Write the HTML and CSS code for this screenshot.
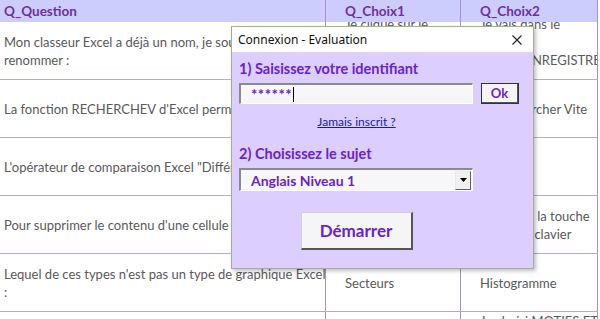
FILE: index.html
```html
<!DOCTYPE html>
<html lang="fr">
<head>
    <meta charset="UTF-8">
    <meta name="viewport" content="width=device-width, initial-scale=1.0">
    <title>Connexion - Evaluation</title>
    <link rel="stylesheet" href="styles.css">
</head>
<body>
    <div class="sheet">
        <div class="row head">
            <div class="cell">Q_Question</div>
            <div class="cell choice">Q_Choix1</div>
            <div class="cell choice">Q_Choix2</div>
        </div>
        <div class="row">
            <div class="cell"><div>Mon classeur Excel a déjà un nom, je souhaite le<br>renommer :</div></div>
            <div class="cell choice"><div>Je clique sur le<br>bouton Office<br>Renommer<br>sous</div></div>
            <div class="cell choice"><div>Je vais dans le<br>menu<br>Fichier, ENREGISTRER SOUS<br>sous</div></div>
        </div>
        <div class="row">
            <div class="cell"><div>La fonction RECHERCHEV d'Excel permet de :</div></div>
            <div class="cell choice"><div>Rechercher</div></div>
            <div class="cell choice"><div>De rechercher Vite</div></div>
        </div>
        <div class="row">
            <div class="cell"><div>L'opérateur de comparaison Excel "Différent de" s'écrit :</div></div>
            <div class="cell choice"><div>!=</div></div>
            <div class="cell choice"><div>&lt;&gt;</div></div>
        </div>
        <div class="row">
            <div class="cell"><div>Pour supprimer le contenu d'une cellule :</div></div>
            <div class="cell choice"><div>Suppr</div></div>
            <div class="cell choice"><div>J'enfonce la touche<br>Suppr du clavier</div></div>
        </div>
        <div class="row">
            <div class="cell"><div>Lequel de ces types n'est pas un type de graphique Excel<br>:</div></div>
            <div class="cell choice"><div>Secteurs</div></div>
            <div class="cell choice"><div>Histogramme</div></div>
        </div>
        <div class="row last">
            <div class="cell"><div></div></div>
            <div class="cell choice"><div></div></div>
            <div class="cell choice"><div>Je choisi MOTIES ET</div></div>
        </div>
    </div>

    <div class="dialog">
        <div class="title-bar">
            <span>Connexion - Evaluation</span>
            <svg class="close" width="10" height="10" viewBox="0 0 10 10">
                <path d="M0.5 0.5 L9.5 9.5 M9.5 0.5 L0.5 9.5" stroke="#222" stroke-width="1.1" fill="none"/>
            </svg>
        </div>
        <div class="dialog-body">
            <div class="label">1) Saisissez votre identifiant</div>
            <div class="login-line">
                <div class="text-box">******<span class="caret"></span></div>
                <button class="ok-btn">Ok</button>
            </div>
            <div class="link-line"><a href="#">Jamais inscrit ?</a></div>
            <div class="label second">2) Choisissez le sujet</div>
            <div class="combo">
                <span>Anglais Niveau 1</span>
                <span class="drop-btn">
                    <svg width="7" height="4" viewBox="0 0 7 4"><path d="M0 0 H7 L3.5 4 Z" fill="#000"/></svg>
                </span>
            </div>
            <div class="start-line">
                <button class="start-btn">Démarrer</button>
            </div>
        </div>
    </div>
</body>
</html>
```

FILE: styles.css
```css
* {
    margin: 0;
    padding: 0;
    box-sizing: border-box;
}

body {
    width: 600px;
    height: 319px;
    overflow: hidden;
    background: #fff;
    font-family: Lato, 'Liberation Sans', sans-serif;
    position: relative;
}

/* worksheet behind the form */
.sheet {
    width: 598px;
}

.row {
    display: grid;
    grid-template-columns: 326px 135px 137px;
    height: 58px;
    border-bottom: 1px solid #b9a9d9;
    color: #595959;
    font-size: 13px;
    line-height: 18px;
}

.row.head {
    height: 22px;
    border-bottom: none;
    background: #cdcdfd;
    color: #7030a0;
    font-weight: bold;
    font-size: 13.5px;
}

.cell {
    display: flex;
    align-items: center;
    padding-left: 4px;
    border-right: 1px solid #a68fcc;
    overflow: hidden;
    white-space: nowrap;
}

.cell.choice {
    padding-left: 19px;
}

.row.last .cell {
    align-items: flex-start;
}

/* form window */
.dialog {
    position: absolute;
    left: 231px;
    top: 26px;
    width: 303px;
    height: 243px;
    border: 1px solid #a3b08f;
    background: #dccfff;
    box-shadow: 2px 2px 4px rgba(0, 0, 0, 0.25);
    display: flex;
    flex-direction: column;
}

.title-bar {
    height: 25px;
    background: #fff;
    display: flex;
    align-items: center;
    justify-content: space-between;
    padding: 0 11px 0 6px;
    font-family: 'Noto Sans', sans-serif;
    font-size: 12px;
    color: #111;
}

.dialog-body {
    padding: 7px 0 0 7px;
    width: 242px;
    font-family: Lato, sans-serif;
    font-weight: bold;
    color: #6a22c9;
}

.label {
    font-size: 14.5px;
    line-height: 20px;
}

.label.second {
    margin-top: 14px;
}

.login-line {
    display: flex;
    gap: 8px;
    margin-top: 4px;
    width: 281px;
}

.text-box {
    width: 234px;
    height: 21px;
    background: #f7f7f7;
    border-top: 2px solid #8a8a8a;
    border-left: 2px solid #8a8a8a;
    border-bottom: 1px solid #fff;
    border-right: 1px solid #fff;
    padding-left: 10px;
    font-size: 15px;
    letter-spacing: 0.5px;
    line-height: 19px;
    display: flex;
    align-items: center;
}

.caret {
    display: inline-block;
    width: 1px;
    height: 15px;
    margin-left: 1px;
    background: #000;
}

.ok-btn, .start-btn {
    background: #f5f5f5;
    border-top: 1px solid #d0d0d0;
    border-left: 1px solid #d0d0d0;
    border-right: 2px solid #555;
    border-bottom: 2px solid #555;
    font-family: Lato, sans-serif;
    font-weight: bold;
    color: #6a22c9;
}

.ok-btn {
    width: 38px;
    height: 21px;
    font-size: 13px;
    outline: 1px solid #333;
    outline-offset: -1px;
}

.link-line {
    margin-top: 8px;
    text-align: center;
    line-height: 16px;
}

.link-line a {
    font-size: 12px;
    font-weight: normal;
    color: #1a1aa8;
    text-decoration: underline;
}

.combo {
    margin-top: 4px;
    width: 234px;
    height: 23px;
    background: #f7f7f7;
    border-top: 2px solid #8a8a8a;
    border-left: 2px solid #8a8a8a;
    border-bottom: 1px solid #fff;
    border-right: 1px solid #fff;
    padding-left: 10px;
    font-size: 14px;
    display: flex;
    align-items: center;
    justify-content: space-between;
}

.drop-btn {
    width: 16px;
    height: 19px;
    background: #f0f0f0;
    border-top: 1px solid #e8e8e8;
    border-left: 1px solid #e8e8e8;
    border-right: 1px solid #606060;
    border-bottom: 1px solid #606060;
    display: flex;
    align-items: center;
    justify-content: center;
    margin-right: 1px;
}

.start-line {
    margin-top: 21px;
    display: flex;
    justify-content: center;
}

.start-btn {
    width: 112px;
    height: 38px;
    font-size: 17px;
}
```
